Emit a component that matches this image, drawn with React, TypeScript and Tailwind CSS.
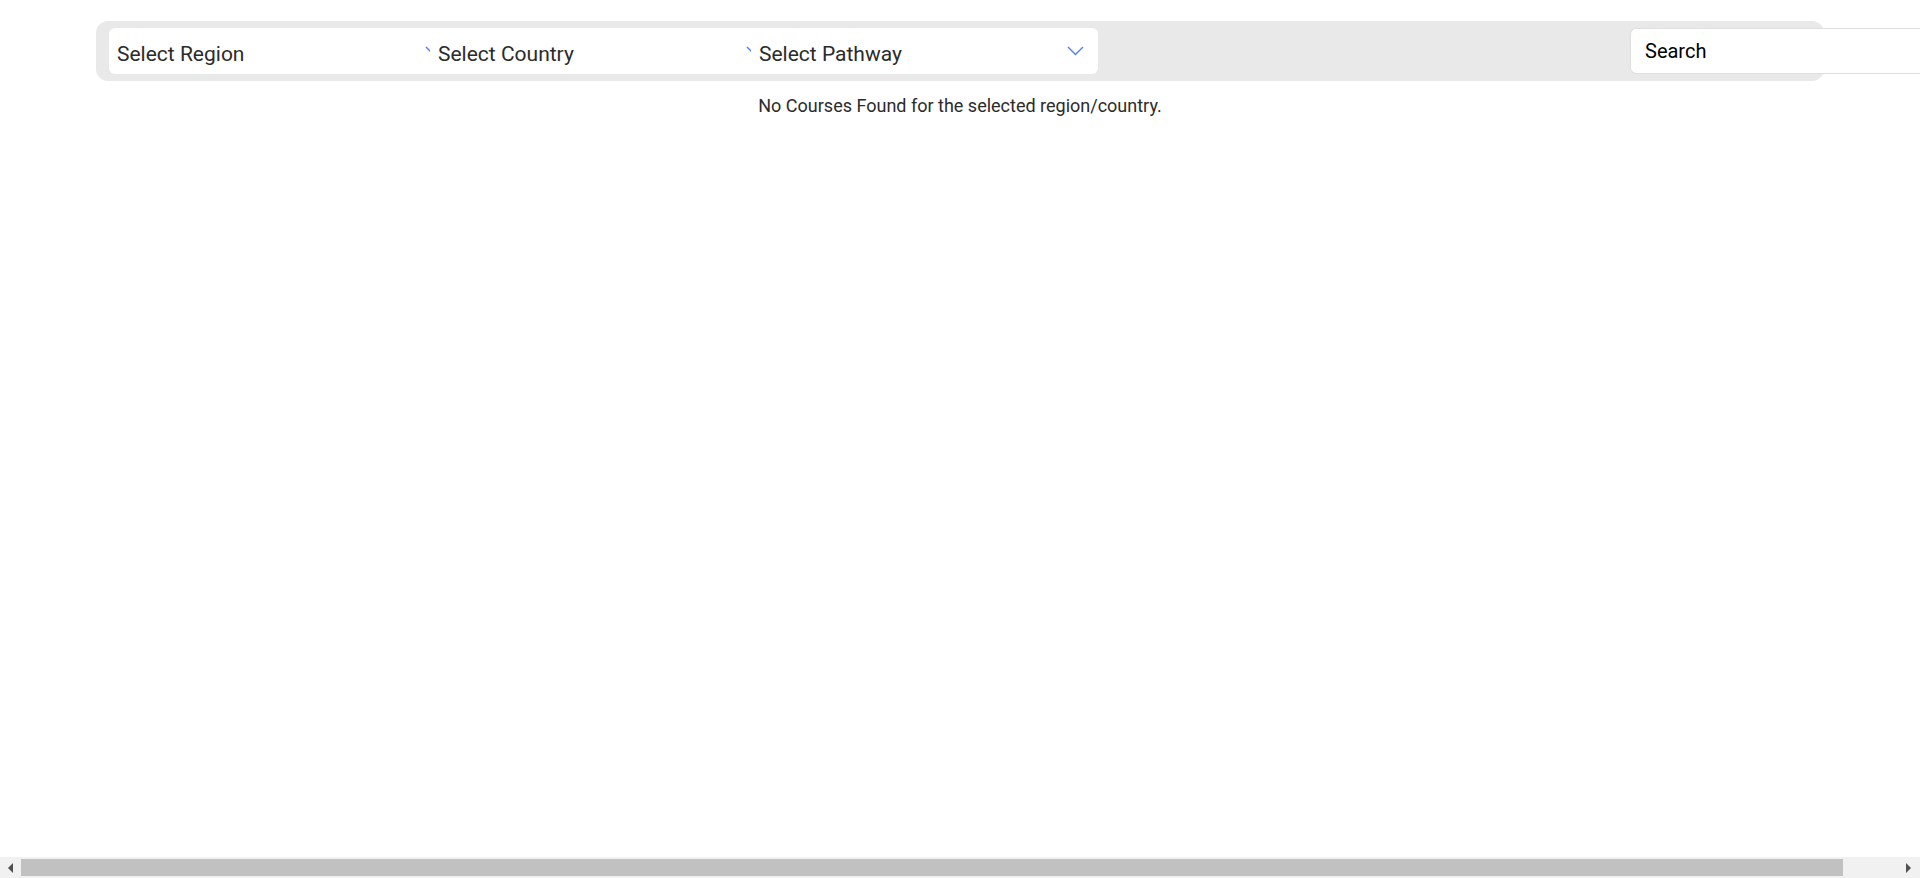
import React from 'react';

const selects = ['Select Region', 'Select Country', 'Select Pathway'];

function Chevron() {
  return (
    <svg width="17" height="10" viewBox="0 0 17 10" fill="none" className="shrink-0">
      <polyline points="1,1 8.5,8.5 16,1" stroke="#4f7dfb" strokeWidth="1.4" />
    </svg>
  );
}

function SelectBox({ label, last }: { label: string; last: boolean }) {
  return (
    <div className={last ? 'w-[347px] overflow-hidden' : 'w-[321px] overflow-hidden'}>
      <div className="flex h-full w-[347px] items-center justify-between pl-2 pr-[14px]">
        <span className="pt-[7px] text-[21px] leading-none text-[#2b2b2b]">{label}</span>
        <Chevron />
      </div>
    </div>
  );
}

// the page overflows sideways; headless hides the native bar, so it is drawn here
function ScrollBar() {
  return (
    <div className="fixed inset-x-0 bottom-0 flex h-[21px] items-center bg-[#f1f1f1]">
      <div className="flex w-[21px] shrink-0 justify-center">
        <svg width="6" height="10" viewBox="0 0 6 10">
          <polygon points="5,0 5,10 0,5" fill="#505050" />
        </svg>
      </div>
      <div className="h-[17px] w-[1822px] shrink-0 bg-[#c1c1c1]" />
      <div className="flex flex-1 justify-end pr-[8px]">
        <svg width="6" height="10" viewBox="0 0 6 10">
          <polygon points="0,0 0,10 5,5" fill="#505050" />
        </svg>
      </div>
    </div>
  );
}

export default function App() {
  return (
    <div className="min-h-screen bg-white font-['Roboto','Liberation_Sans',sans-serif]">
      <div className="pt-[21px]">
        <div className="mx-auto flex h-[60px] w-[90%] items-center rounded-[12px] bg-[#e9e9e9] pl-[13px]">
          <div className="flex h-[46px] shrink-0 rounded-[6px] bg-white">
            {selects.map((label, i) => (
              <SelectBox key={label} label={label} last={i === selects.length - 1} />
            ))}
          </div>
          <div className="ml-[532px] flex h-[46px] w-[358px] shrink-0 items-center rounded-l-[6px] border border-r-0 border-[#dedede] bg-white pl-[14px] text-[20px] text-black">
            Search
          </div>
        </div>
        <p className="mt-[11px] text-center text-[18px] leading-[27px] text-[#2b2b2b]">
          No Courses Found for the selected region/country.
        </p>
      </div>
      <ScrollBar />
    </div>
  );
}
